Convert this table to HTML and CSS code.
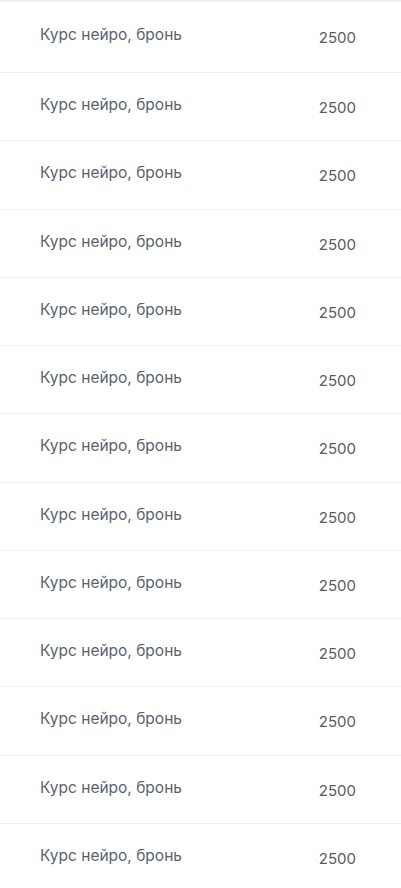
FILE: index.html
```html
<!DOCTYPE html>
<html lang="ru">
<head>
    <meta charset="UTF-8">
    <meta name="viewport" content="width=device-width, initial-scale=1.0">
    <title>Платежи</title>
    <link rel="stylesheet" href="styles.css">
</head>
<body>
    <ul class="pay-list">
        <li class="pay-row"><span class="pay-name">Курс нейро, бронь</span><span class="pay-sum">2500</span></li>
        <li class="pay-row"><span class="pay-name">Курс нейро, бронь</span><span class="pay-sum">2500</span></li>
        <li class="pay-row"><span class="pay-name">Курс нейро, бронь</span><span class="pay-sum">2500</span></li>
        <li class="pay-row"><span class="pay-name">Курс нейро, бронь</span><span class="pay-sum">2500</span></li>
        <li class="pay-row"><span class="pay-name">Курс нейро, бронь</span><span class="pay-sum">2500</span></li>
        <li class="pay-row"><span class="pay-name">Курс нейро, бронь</span><span class="pay-sum">2500</span></li>
        <li class="pay-row"><span class="pay-name">Курс нейро, бронь</span><span class="pay-sum">2500</span></li>
        <li class="pay-row"><span class="pay-name">Курс нейро, бронь</span><span class="pay-sum">2500</span></li>
        <li class="pay-row"><span class="pay-name">Курс нейро, бронь</span><span class="pay-sum">2500</span></li>
        <li class="pay-row"><span class="pay-name">Курс нейро, бронь</span><span class="pay-sum">2500</span></li>
        <li class="pay-row"><span class="pay-name">Курс нейро, бронь</span><span class="pay-sum">2500</span></li>
        <li class="pay-row"><span class="pay-name">Курс нейро, бронь</span><span class="pay-sum">2500</span></li>
        <li class="pay-row"><span class="pay-name">Курс нейро, бронь</span><span class="pay-sum">2500</span></li>
    </ul>
</body>
</html>
```
FILE: styles.css
```css
body {
    margin: 0;
    background: #fff;
    font-family: Inter, Roboto, sans-serif;
}

.pay-list {
    list-style: none;
    margin: 0;
    padding: 0;
    border-top: 2px solid #eff1f3;
}

.pay-row {
    display: flex;
    justify-content: space-between;
    align-items: flex-start;
    box-sizing: border-box;
    height: 68.27px;
    padding: 22px 45px 0 40px;
    border-bottom: 1px solid #eceef0;
}

.pay-row:first-child {
    height: 71px;
    padding-top: 23px;
}

.pay-name {
    font-size: 15.5px;
    line-height: 20px;
    color: #5a626d;
}

.pay-sum {
    font-size: 15px;
    line-height: 20px;
    margin-top: 3px;
    color: #585c62;
}
```
